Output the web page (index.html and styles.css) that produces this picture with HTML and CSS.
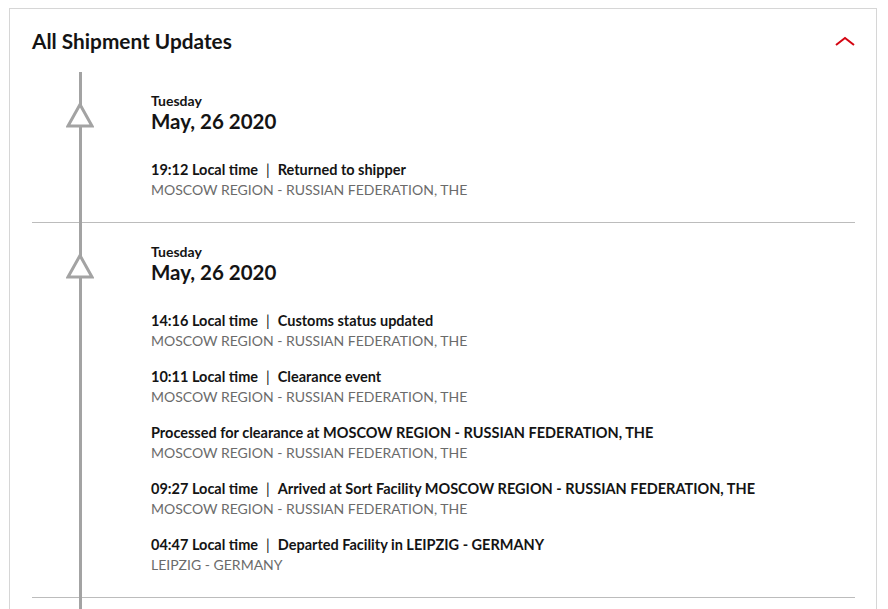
FILE: index.html
```html
<!DOCTYPE html>
<html lang="en">
<head>
    <meta charset="UTF-8">
    <meta name="viewport" content="width=device-width, initial-scale=1.0">
    <title>All Shipment Updates</title>
    <link rel="stylesheet" href="styles.css">
</head>
<body>
    <div class="card">
        <div class="card-head">
            <h2>All Shipment Updates</h2>
            <svg class="chevron" width="20" height="10" viewBox="0 0 20 10">
                <polyline points="1,9 10,2 19,9" fill="none" stroke="#d40511" stroke-width="2"/>
            </svg>
        </div>

        <div class="timeline">
            <div class="day">
                <div class="rail">
                    <svg class="marker" width="28" height="26" viewBox="0 0 28 26">
                        <polygon points="14,2.5 26,24 2,24" fill="#fff" stroke="#a3a3a3" stroke-width="3"/>
                    </svg>
                </div>
                <div class="events">
                    <div class="weekday">Tuesday</div>
                    <div class="date">May, 26 2020</div>
                    <div class="event">
                        <div class="event-title">19:12 Local time<span class="sep">|</span>Returned to shipper</div>
                        <div class="event-place">MOSCOW REGION - RUSSIAN FEDERATION, THE</div>
                    </div>
                </div>
            </div>

            <div class="day">
                <div class="rail">
                    <svg class="marker" width="28" height="26" viewBox="0 0 28 26">
                        <polygon points="14,2.5 26,24 2,24" fill="#fff" stroke="#a3a3a3" stroke-width="3"/>
                    </svg>
                </div>
                <div class="events">
                    <div class="weekday">Tuesday</div>
                    <div class="date">May, 26 2020</div>
                    <div class="event">
                        <div class="event-title">14:16 Local time<span class="sep">|</span>Customs status updated</div>
                        <div class="event-place">MOSCOW REGION - RUSSIAN FEDERATION, THE</div>
                    </div>
                    <div class="event">
                        <div class="event-title">10:11 Local time<span class="sep">|</span>Clearance event</div>
                        <div class="event-place">MOSCOW REGION - RUSSIAN FEDERATION, THE</div>
                    </div>
                    <div class="event">
                        <div class="event-title">Processed for clearance at MOSCOW REGION - RUSSIAN FEDERATION, THE</div>
                        <div class="event-place">MOSCOW REGION - RUSSIAN FEDERATION, THE</div>
                    </div>
                    <div class="event">
                        <div class="event-title">09:27 Local time<span class="sep">|</span>Arrived at Sort Facility MOSCOW REGION - RUSSIAN FEDERATION, THE</div>
                        <div class="event-place">MOSCOW REGION - RUSSIAN FEDERATION, THE</div>
                    </div>
                    <div class="event">
                        <div class="event-title">04:47 Local time<span class="sep">|</span>Departed Facility in LEIPZIG - GERMANY</div>
                        <div class="event-place">LEIPZIG - GERMANY</div>
                    </div>
                </div>
            </div>

            <div class="day day-next"></div>
        </div>
    </div>
</body>
</html>
```

FILE: styles.css
```css
body {
    margin: 0;
    padding: 8px 11px 0 9px;
    font-family: 'Lato', 'Liberation Sans', sans-serif;
    color: #141414;
    background: #fff;
    overflow: hidden;
}

.card {
    border: 1px solid #d6d6d6;
    border-bottom: none;
    min-height: 640px;
}

.card-head {
    display: flex;
    justify-content: space-between;
    align-items: center;
    height: 63px;
    padding: 0 21px 0 22px;
}

.card-head h2 {
    margin: 0;
    font-size: 20.8px;
    line-height: 24px;
    font-weight: 700;
    padding-top: 1px;
}

.chevron {
    display: block;
    margin-top: 1px;
}

.timeline {
    position: relative;
    margin: 0 21px 0 22px;
}

/* the grey rail that runs through every day */
.timeline::before {
    content: "";
    position: absolute;
    top: 0;
    bottom: 0;
    left: 47px;
    width: 3px;
    background: #a3a3a3;
    z-index: 1;
}

.day {
    display: grid;
    grid-template-columns: 119px 1fr;
    border-bottom: 1px solid #bcbcbc;
    padding: 21px 0 22px;
}

.day-next {
    border-bottom: none;
    height: 40px;
}

.rail {
    position: relative;
}

.marker {
    position: relative;
    z-index: 2;
    display: block;
    margin: 9px 0 0 34px;
}

.weekday {
    font-size: 14px;
    line-height: 16px;
    font-weight: 700;
}

.date {
    font-size: 20.5px;
    line-height: 24px;
    font-weight: 700;
    margin-bottom: 27px;
}

.event {
    margin-bottom: 16px;
}

.event:last-child {
    margin-bottom: 0;
}

.event-title {
    font-size: 14.5px;
    line-height: 20px;
    font-weight: 700;
}

.sep {
    font-weight: 400;
    margin: 0 8px;
}

.event-place {
    font-size: 14px;
    line-height: 20px;
    color: #6b6b6b;
}
```
